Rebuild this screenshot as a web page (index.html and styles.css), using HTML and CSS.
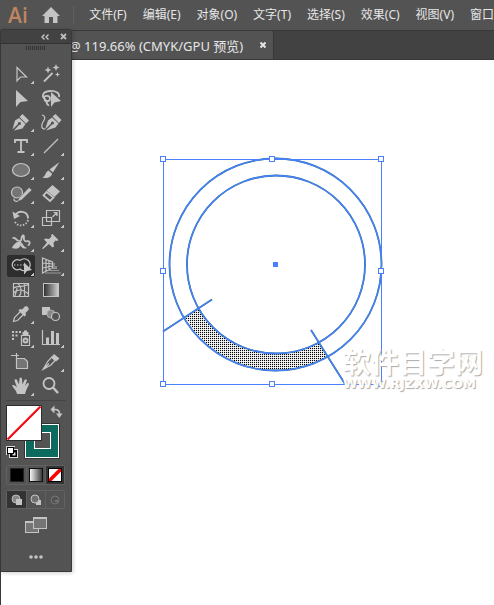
FILE: index.html
```html
<!DOCTYPE html>
<html lang="zh-CN">
<head>
<meta charset="utf-8">
<meta name="viewport" content="width=device-width, initial-scale=1">
<title>Ai</title>
<link rel="stylesheet" href="styles.css">
</head>
<body>
<div class="app">
  <header class="menubar">
    <span class="logo">Ai</span>
    <button class="home">
      <svg width="20" height="18" viewBox="0 0 20 18"><path d="M10 1 19 10H16.500V17H12V11H8V17H3.500V10H1Z" fill="#c4c4c4"/></svg>
    </button>
    <nav class="menus">
      <button>文件(F)</button>
      <button>编辑(E)</button>
      <button>对象(O)</button>
      <button>文字(T)</button>
      <button>选择(S)</button>
      <button>效果(C)</button>
      <button>视图(V)</button>
      <button>窗口</button>
    </nav>
  </header>

  <div class="tabs">
    <div class="tab">
      <span>@ 119.66% (CMYK/GPU 预览)</span>
      <button class="tab-close"><svg width="8" height="8" viewBox="0 0 8 8"><path d="M1.500 1.500 6.500 6.500M6.500 1.500 1.500 6.500" stroke="#e6e6e6" stroke-width="2"/></svg></button>
    </div>
  </div>

  <main class="canvas">
    <svg class="artwork" width="240" height="240" viewBox="155 150 240 240">
      <defs>
        <pattern id="dots" width="2" height="2" patternUnits="userSpaceOnUse">
          <rect width="2" height="2" fill="#fff"/>
          <rect width="1" height="1" fill="#000"/><rect x="1" width="1" height="1" fill="#ddd"/><rect y="1" width="1" height="1" fill="#ddd"/>
        </pattern>
      </defs>
      <path d="M185 317A106 106 0 0 0 328 357L319.500 342A89 89 0 0 1 198.500 308.500Z" fill="url(#dots)" shape-rendering="crispEdges"/>
      <g fill="none" stroke="#2b7389" stroke-width="1.800">
        <circle cx="275.500" cy="264.500" r="106"/>
        <circle cx="276" cy="264.500" r="89"/>
        <path d="M163 331.500 212 299.500M311 330 345 384"/>
      </g>
      <g fill="none" stroke="#4a80ff" stroke-width="1.300">
        <circle cx="275.500" cy="264.500" r="106"/>
        <circle cx="276" cy="264.500" r="89"/>
        <path d="M163 331.500 212 299.500M311 330 345 384"/>
      </g>
      <rect x="163.500" y="159.500" width="218" height="225" fill="none" stroke="#4a80ff"/>
      <rect x="273" y="262" width="5" height="5" fill="#4a80ff"/>
      <g fill="#fff" stroke="#4a80ff">
        <rect x="160.500" y="156.500" width="5" height="5"/><rect x="269.500" y="156.500" width="5" height="5"/><rect x="378.500" y="156.500" width="5" height="5"/>
        <rect x="160.500" y="268.500" width="5" height="5"/><rect x="378.500" y="268.500" width="5" height="5"/>
        <rect x="160.500" y="381.500" width="5" height="5"/><rect x="269.500" y="381.500" width="5" height="5"/><rect x="378.500" y="381.500" width="5" height="5"/>
      </g>
    </svg>
    <div class="watermark">
      <span class="mark-name">软件目字网</span>
      <span class="mark-url">WWW.RJZXW.COM</span>
    </div>
  </main>

  <aside class="panel">
    <div class="panel-head">
      <button><svg width="8" height="6" viewBox="0 0 8 6"><path d="M3.500 .5 1 3 3.500 5.500M7.500 .5 5 3 7.500 5.500" fill="none" stroke="#c8c8c8" stroke-width="1.400"/></svg></button>
      <button><svg width="7" height="7" viewBox="0 0 7 7"><path d="M1 1 6 6M6 1 1 6" stroke="#bdbdbd" stroke-width="1.800"/></svg></button>
    </div>
    <div class="grip"></div>

    <div class="tools">
      <button class="tool more"><svg viewBox="0 0 28 22"><path class="ln" d="M10 4.500V18L13.500 14H19.500Z"/></svg></button>
      <button class="tool"><svg viewBox="0 0 28 22"><path class="ln w2" d="M7 18.500 15.500 10"/><path class="fl" d="M11 3.500 12 6 14.500 7 12 8 11 10.500 10 8 7.500 7 10 6ZM19 1 20 3.500 22.500 4.500 20 5.500 19 8 18 5.500 15.500 4.500 18 3.500ZM20.500 9 21.200 10.800 23 11.500 21.200 12.200 20.500 14 19.800 12.200 18 11.500 19.800 10.800Z"/></svg></button>
      <button class="tool"><svg viewBox="0 0 28 22"><path class="fl" d="M9 3V20L13.500 15 21 14Z"/></svg></button>
      <button class="tool"><svg viewBox="0 0 28 22"><path class="ln w2" d="M9 13C4 10 5 4.500 13 4C19 3.700 23 6 22 10M7 11C7 8 13 8 13 11.500C13 15 8 15 7.500 12.500M10 13C9 16 10 17.500 12 18.500"/><path class="fl" d="M14 5V20L17.500 15.500 24 14Z"/></svg></button>
      <button class="tool more"><svg viewBox="0 0 28 22"><path class="fl" d="M15.500 3 22 9.500 19 12.500 12.500 6ZM12 7 18.500 13 15.500 17.500 7 19.500 12 14A1.500 1.500 0 1 0 11 13L5.500 18.500 8 9.500Z"/></svg></button>
      <button class="tool"><svg viewBox="0 0 28 22"><path class="ln" d="M5 4C9 5 8 8 6 11C4 14 4 18 8 18"/><path class="fl" d="M18.500 3 24.500 9 22 12 15.500 5.500ZM15 6.500 21.500 12.500 18.500 16.500 9 19.500 15 13.500A1.500 1.500 0 1 0 14 12.500L8 18.500 11 9.500Z"/></svg></button>
      <button class="tool more"><svg viewBox="0 0 28 22"><path class="ln w2" d="M8 8V5H20V8M14 5V17M10.500 17H17.500"/></svg></button>
      <button class="tool more"><svg viewBox="0 0 28 22"><path class="ln" d="M7 18 21 4"/></svg></button>
      <button class="tool more"><svg viewBox="0 0 28 22"><ellipse class="ln shade" cx="14" cy="11" rx="8.500" ry="6.500"/></svg></button>
      <button class="tool more"><svg viewBox="0 0 28 22"><path class="fl" d="M22.500 3 16 13.500 12.500 10.500ZM11.500 11.500 15 14.500C15 18 10 20 5.500 18.500C9 17 8 13 11.500 11.500Z"/></svg></button>
      <button class="tool more"><svg viewBox="0 0 28 22"><circle class="ln shade" cx="10" cy="9.500" r="5.500"/><path class="fl edge" d="M22 4.500 25 7 14.500 17 10.500 18.500 12 15Z"/><path class="ln" d="M11 18C8 19 6 17 7.500 15.500"/></svg></button>
      <button class="tool more"><svg viewBox="0 0 28 22"><path class="fl" d="M15.500 2 23 8.500 17.500 14 9.500 7.500Z"/><path class="ln w2" d="M9.500 9 16.500 14.500 13 18 6.500 12.500Z"/></svg></button>
      <button class="tool more"><svg viewBox="0 0 28 22"><path class="ln w2" d="M8 9C10 3 21 3 21 11.500"/><path class="fl" d="M5.500 4.500 7 12 13 9Z"/><path class="ln w2 dotted" d="M21 13C19 20 10 20 7.500 14"/></svg></button>
      <button class="tool more"><svg viewBox="0 0 28 22"><path class="ln" d="M9.500 3.500H22.500V14.500H9.500ZM5.500 10.500H14.500V18.500H5.500ZM15.500 10 19.500 6M16.500 5.500H20V9"/></svg></button>
      <button class="tool more"><svg viewBox="0 0 28 22"><path class="ln w2" d="M5.500 7C9 6 8 9 12 10C16 11 13 5 16.500 4.500C18 6 15.500 9 18 10C20 11 22 9 22.500 11C23 13 21.500 15 21 13.500M5.500 17 11 11.500"/><path class="fl" d="M6 15C9 11 13 9.500 15 12C16.500 14 17 16 20 17C16 18.500 14.500 16.500 13.500 14.500C13 17.500 9 18.500 6 17Z"/></svg></button>
      <button class="tool more"><svg viewBox="0 0 28 22"><path class="fl" d="M15.500 3 21.500 9 20 10 18.500 9.500 16.500 12 17 15.500 15.500 16.500 12 13 6 18 5 17.500 10 11.500 7 8.500 8.500 7.500 12 8 14.500 5.500 14 4Z"/></svg></button>
      <button class="tool more on"><svg viewBox="0 0 28 22"><path class="ln" d="M13 5.500A5 5 0 1 0 13 14A6 6 0 1 0 13 5.500"/><path class="ln dotted" d="M7 10H18"/><path class="fl" d="M17 7.500V19.500L20 16 25 15Z"/></svg></button>
      <button class="tool more"><svg viewBox="0 0 28 22"><path class="ln" d="M5.500 3 15.500 7V13L5.500 18ZM9 4.500V16M12 5.500V15M5.500 8 15.500 9M5.500 13 15.500 11"/><path d="M14 13.500H20M11 15.500H22M8 18H24" stroke="#999"/><path d="M16 8H18V11H20V13H16Z" fill="#888"/></svg></button>
      <button class="tool"><svg viewBox="0 0 28 22"><path class="ln" d="M6.500 4.500H21.500V17.500H6.500ZM11 4.500C15 8 15 14 12 17.500M6.500 9C11 6 17 9 21.500 5M6.500 14C11 9 17 11 21.500 15M17 4.500C19 8 16 9 18 17.500M8 17.500C8 14 10 13 10 9"/></svg></button>
      <button class="tool"><svg viewBox="0 0 28 22"><defs><linearGradient id="ramp"><stop stop-color="#2b2b2b"/><stop offset="1" stop-color="#d0d0d0"/></linearGradient></defs><rect x="6.500" y="4.500" width="15" height="13" fill="url(#ramp)" stroke="#c4c4c4"/></svg></button>
      <button class="tool more"><svg viewBox="0 0 28 22"><path class="ln" d="M14 8 7.500 14.500 6.500 18.500 10.500 17.500 17 11"/><path class="fl" d="M13 6 15 6.500 18 3.500C20 2.500 22.500 5 21.500 7L18.500 10 19 12 17.500 13.500 11.500 7.500Z"/></svg></button>
      <button class="tool"><svg viewBox="0 0 28 22"><rect class="fl" x="5" y="4" width="8" height="8"/><circle cx="14" cy="11" r="4" fill="#888" stroke="#aaa"/><circle class="ln back" cx="18.500" cy="13.500" r="4"/></svg></button>
      <button class="tool more"><svg viewBox="0 0 28 22"><path class="ln" d="M14.500 8.500H22.500V18.500H14.500Z"/><path class="fl" d="M15.500 5H17V3.500H20V5H21.500V8H15.500Z"/><circle class="ln w2" cx="18.500" cy="13.500" r="2"/><path class="fl" d="M5 4h2v2H5zM8.500 4h2v2h-2zM12 4h2v2h-2zM5 7.500h2v2H5zM8.500 7.500h2v2h-2zM5 11h2v2H5z"/></svg></button>
      <button class="tool more"><svg viewBox="0 0 28 22"><path class="ln" d="M5.500 3V17.500H23"/><path class="fl" d="M9 10.500h3V17H9zM14 4h3v13h-3zM19 6h3v11h-3z"/></svg></button>
      <button class="tool"><svg viewBox="0 0 28 22"><path class="ln" d="M9.500 2V7.500M4 4.500H12"/><path class="ln shade" d="M9.500 7.500H17.500L20.500 10.500V17.500H9.500Z"/></svg></button>
      <button class="tool more"><svg viewBox="0 0 28 22"><path class="ln" d="M15 6 11 10 6 18.500 14 14 18 9.500ZM7 17.500 12 12.500"/><path class="fl" d="M17 3 22.500 7.500 19 10.500 14 6.500Z"/></svg></button>
      <button class="tool more"><svg viewBox="0 0 28 22"><path class="fl" d="M10 19C9.500 15.500 6 12.500 5 10.500C6 9 8.500 10.500 10 12.500L7.500 5.500C8 3.500 10 4 10.500 6L12 9.500 12.500 3.500C13 2 15 2 15 4L15.500 9.500 17.500 5C18.500 3.500 20.500 4.500 19.500 6.500L18 11 20 8.500C21.500 7.500 22.500 8.500 21.500 10.500C20 13.500 19 15 18 19Z"/></svg></button>
      <button class="tool"><svg viewBox="0 0 28 22"><circle class="ln w2" cx="12" cy="8.500" r="5.500"/><path class="ln w3" d="M16 12.500 21 18"/></svg></button>
    </div>

    <div class="paint">
      <svg width="60" height="56" viewBox="6 404 60 56">
        <path d="M24.500 423.500H59.500V458.500H24.500Z" fill="#fff" stroke="#333"/>
        <path d="M26 425H58V457H26ZM35 433V449H50V433Z" fill="#0c6b5e" fill-rule="evenodd"/>
        <rect x="34.500" y="432.500" width="16" height="16" fill="#535353" stroke="#fff"/>
        <rect x="6.500" y="405.500" width="35" height="35" fill="#fff" stroke="#2c2c2c"/>
        <path d="M7.500 439.500 40.500 406.500" stroke="#f30d19" stroke-width="2.300"/>
        <path d="M53.500 409.500H55C58 409.500 59.500 411 59.500 414" fill="none" stroke="#c4c4c4" stroke-width="1.600"/>
        <path d="M50.500 409.500 54.500 405.500V413.500ZM56 413.500H62.500L59.300 418Z" fill="#c4c4c4"/>
        <rect x="9.500" y="449.500" width="8" height="8" fill="#000" stroke="#ddd"/><rect x="12.500" y="452.500" width="3" height="3" fill="#ddd"/>
        <rect x="7.500" y="447.500" width="6" height="6" fill="#fff" stroke="#000"/><path d="M6.500 455V446.500H15" fill="none" stroke="#ddd"/>
      </svg>
    </div>

    <div class="segments colors">
      <button><svg width="14" height="14"><rect x=".5" y=".5" width="13" height="13" stroke="#222"/></svg></button>
      <button><svg width="14" height="14"><defs><linearGradient id="bw"><stop stop-color="#fff"/><stop offset="1" stop-color="#333"/></linearGradient></defs><rect x=".5" y=".5" width="13" height="13" fill="url(#bw)" stroke="#111"/></svg></button>
      <button class="on"><svg width="14" height="14"><rect x=".5" y=".5" width="13" height="13" fill="#fff" stroke="#000"/><path d="M1 10.500 10.500 1H13V3.500L3.500 13H1Z" fill="#f00"/></svg></button>
    </div>
    <div class="segments modes">
      <button class="on"><svg width="12" height="12"><circle cx="5" cy="5" r="4" fill="#888" stroke="#bbb"/><path d="M5 5h6v6H5z" fill="#c4c4c4"/></svg></button>
      <button><svg width="12" height="12"><path d="M6 6h5v5H6z" fill="#c4c4c4"/><circle cx="5" cy="5" r="4" fill="#707070" stroke="#c4c4c4"/></svg></button>
      <button><svg width="12" height="12"><circle cx="6" cy="6" r="4" fill="none" stroke="#747474"/><path d="M6 6h3v2H6z" fill="#747474"/></svg></button>
    </div>
    <button class="screen"><svg width="22" height="16"><rect x=".5" y="4.500" width="13" height="11" fill="#757575" stroke="#c4c4c4"/><path d="M0 5.500h14" stroke="#c4c4c4"/><rect x="8.500" y=".5" width="13" height="11" fill="#757575" stroke="#c4c4c4"/><path d="M8 1.500h14" stroke="#c4c4c4"/></svg></button>
    <button class="dots"><svg width="14" height="4" fill="#c4c4c4"><circle cx="2" cy="2" r="1.800"/><circle cx="7" cy="2" r="1.800"/><circle cx="12" cy="2" r="1.800"/></svg></button>
  </aside>
</div>
</body>
</html>
```
FILE: styles.css
```css
* { box-sizing: border-box; }

body {
  margin: 0;
  font-family: "Noto Sans", "Noto Sans CJK SC", sans-serif;
  font-size: 12px;
  color: #e6e6e6;
}

button {
  margin: 0;
  padding: 0;
  border: 0;
  background: none;
  color: inherit;
  font: inherit;
  white-space: nowrap;
}

svg { display: block; }

.app {
  position: relative;
  display: flex;
  flex-direction: column;
  min-height: 100vh;
  overflow: hidden;
}

.menubar {
  display: flex;
  align-items: center;
  height: 31px;
  padding-left: 8px;
  background: #535353;
  border-bottom: 1px solid #383838;
}

.logo {
  width: 34px;
  color: #bf8560;
  font: 600 21px/28px "Open Sans", sans-serif;
}

.home {
  padding-right: 12px;
  border-right: 1px solid #606060;
}

.menus {
  display: flex;
  gap: 16px;
  padding-left: 15px;
  line-height: 28px;
}

.tabs {
  display: flex;
  height: 29px;
  background: #424242;
  border-bottom: 1px solid #383838;
}

.tab {
  display: flex;
  align-items: center;
  gap: 16px;
  padding: 0 6px 0 69px;
  background: #535353;
  border-right: 1px solid #383838;
  font-size: 13px;
  white-space: nowrap;
}

.canvas {
  position: relative;
  flex: 1;
  background: #fff;
  border-left: 1px solid #383838;
}

.artwork {
  position: absolute;
  left: 154px;
  top: 90px;
}

.watermark {
  position: absolute;
  left: 342px;
  top: 284px;
  display: flex;
  flex-direction: column;
  color: #fff;
  text-shadow: 1px 1px 1px #aaa;
  white-space: nowrap;
}

.mark-name { font: 700 28px/34px "Noto Sans CJK SC", sans-serif; }
.mark-url { font: 700 13px/12px "DejaVu Sans", sans-serif; }

.panel {
  position: absolute;
  left: 0;
  top: 29px;
  display: flex;
  flex-direction: column;
  width: 72px;
  padding-bottom: 12px;
  background: #535353;
  border: 1px solid #383838;
  border-radius: 3px 3px 0 0;
  box-shadow: 1px 1px 4px rgba(0, 0, 0, 0.2);
}

.panel-head {
  display: flex;
  align-items: center;
  justify-content: flex-end;
  gap: 11px;
  height: 14px;
  padding-right: 4px;
  background: #424242;
  border-bottom: 1px solid #333;
}

.grip {
  width: 19px;
  height: 4px;
  margin: 2px 0 13px 25px;
  background: repeating-linear-gradient(90deg, #333 0 1px, #535353 1px 2px);
}

.tools {
  display: grid;
  grid-template-columns: 28px 28px;
  gap: 2px;
  margin: 0 5px;
  padding: 0 1px 3px;
  border-bottom: 1px solid #444;
}

.tool {
  position: relative;
  height: 22px;
  border-radius: 2px;
}

.tool svg { width: 28px; height: 22px; }
.tool.on { background: #2d2d2d; }

.tool.more::after {
  content: "";
  position: absolute;
  right: 1px;
  bottom: 1px;
  width: 3px;
  height: 3px;
  background: linear-gradient(135deg, transparent 40%, #c4c4c4 40%);
}

.ln { fill: none; stroke: #c4c4c4; stroke-width: 1.2; }
.w2 { stroke-width: 1.8; }
.w3 { stroke-width: 2.5; }
.fl { fill: #c4c4c4; }
.shade { fill: #757575; }
.back { fill: #535353; }
.edge { stroke: #535353; stroke-width: 0.5; }
.dotted { stroke-dasharray: 1.5 1.5; }

.paint { margin: 3px 0 5px 5px; }

.segments {
  display: grid;
  grid-template-columns: repeat(3, 1fr);
  margin: 0 6px 5px 5px;
  border: 1px solid #626262;
  border-radius: 2px;
}

.segments button {
  display: grid;
  place-items: center;
}

.segments button + button { border-left: 1px solid #606060; }
.segments .on { background: #333; }
.colors { height: 20px; }
.modes { height: 19px; }

.screen { margin: 3px 0 0 24px; }
.dots { margin: 22px 0 0 28px; }
.screen, .dots { align-self: flex-start; }
```
